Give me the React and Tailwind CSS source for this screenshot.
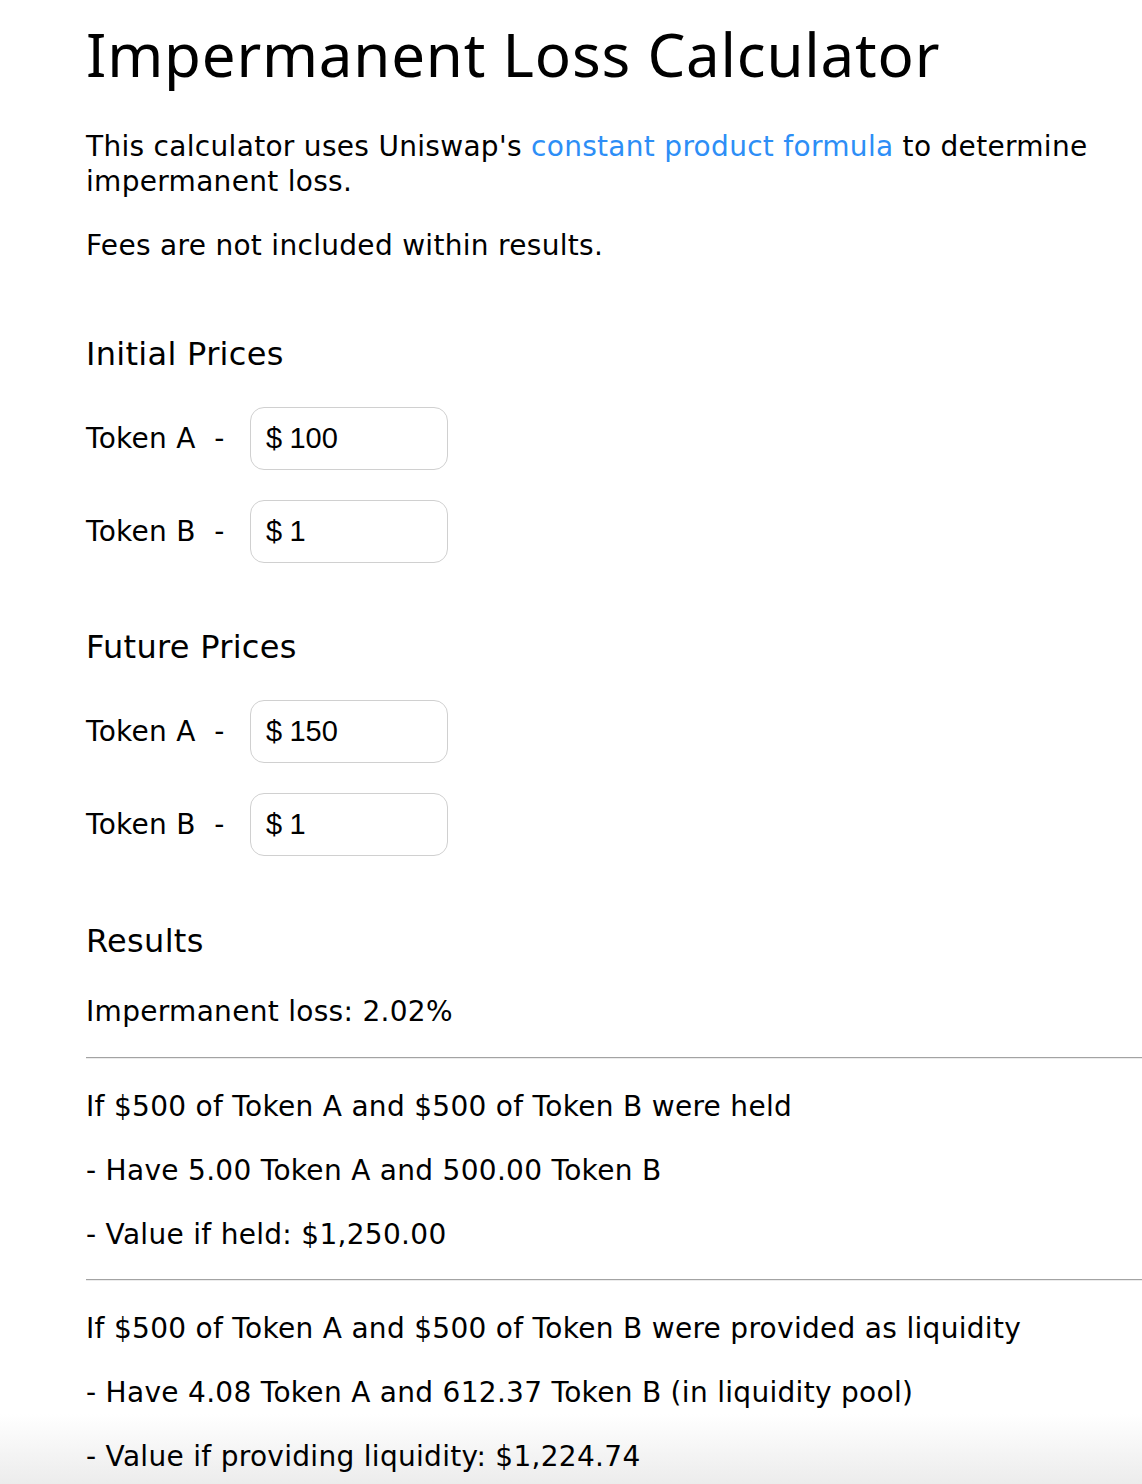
import React, { useState } from 'react';

// Impermanent loss calculator page
const PriceInput = ({ value, onChange }) => (
  <div className="flex items-center w-[198px] h-[63px] rounded-[14px] border border-[#d0d0d0] bg-white px-[15px]">
    <span className="text-[29px] text-black" style={{ fontFamily: '"Liberation Sans", Arial, sans-serif' }}>$</span>
    <input
      value={value}
      onChange={(e) => onChange(e.target.value)}
      className="ml-[7px] w-full bg-transparent outline-none text-[29px] text-black tracking-normal"
      style={{ fontFamily: '"Liberation Sans", Arial, sans-serif' }}
    />
  </div>
);

const TokenRow = ({ label, value, onChange }) => (
  <div className="flex items-center">
    <span className="w-[164px] whitespace-pre">{label}  -</span>
    <PriceInput value={value} onChange={onChange} />
  </div>
);

const fmt = (n) => n.toLocaleString('en-US', { minimumFractionDigits: 2, maximumFractionDigits: 2 });

const App = () => {
  const [initA, setInitA] = useState('100');
  const [initB, setInitB] = useState('1');
  const [futA, setFutA] = useState('150');
  const [futB, setFutB] = useState('1');

  // constant product math
  const ia = parseFloat(initA) || 0;
  const ib = parseFloat(initB) || 0;
  const fa = parseFloat(futA) || 0;
  const fb = parseFloat(futB) || 0;
  const amtA = ia ? 500 / ia : 0;
  const amtB = ib ? 500 / ib : 0;
  const held = amtA * fa + amtB * fb;
  const k = amtA * amtB;
  const ratio = fa && fb ? fa / fb : 0;
  const poolA = ratio ? Math.sqrt(k / ratio) : 0;
  const poolB = ratio ? Math.sqrt(k * ratio) : 0;
  const pooled = poolA * fa + poolB * fb;
  const loss = held ? ((held - pooled) / held) * 100 : 0;

  return (
    <div
      className="relative min-h-[1484px] bg-white text-black overflow-hidden"
      style={{ fontFamily: '"DejaVu Sans", "Noto Sans", sans-serif' }}
    >
      <div className="absolute left-0 right-0 bottom-0 h-[70px] bg-gradient-to-b from-white to-[#ececec]"></div>

      <div className="relative pl-[86px] text-[28px] leading-[35px] tracking-[0.3px]">
        <h1
          className="pt-[18px] text-[60px] leading-[72px] font-normal tracking-[0.8px]"
          style={{ fontFamily: '"Noto Sans", sans-serif' }}
        >
          Impermanent Loss Calculator
        </h1>

        <p className="mt-[39px]">
          This calculator uses Uniswap's{' '}
          <a href="#" className="text-[#2d8ef6]">constant product formula</a> to determine impermanent loss.
        </p>
        <p className="mt-[29px]">Fees are not included within results.</p>

        <h2 className="mt-[71px] text-[32px] leading-[40px]">Initial Prices</h2>
        <div className="mt-[33px] flex flex-col gap-[30px]">
          <TokenRow label="Token A" value={initA} onChange={setInitA} />
          <TokenRow label="Token B" value={initB} onChange={setInitB} />
        </div>

        <h2 className="mt-[64px] text-[32px] leading-[40px]">Future Prices</h2>
        <div className="mt-[33px] flex flex-col gap-[30px]">
          <TokenRow label="Token A" value={futA} onChange={setFutA} />
          <TokenRow label="Token B" value={futB} onChange={setFutB} />
        </div>

        <h2 className="mt-[65px] text-[32px] leading-[40px]">Results</h2>
        <p className="mt-[33px]">Impermanent loss: {loss.toFixed(2)}%</p>

        <hr className="mt-[28px] border-0 border-t border-t-[#a3a3a3] border-b border-b-[#ececec]" />
        <div className="mt-[30px] flex flex-col gap-[29px]">
          <p>If $500 of Token A and $500 of Token B were held</p>
          <p>- Have {fmt(amtA)} Token A and {fmt(amtB)} Token B</p>
          <p>- Value if held: ${fmt(held)}</p>
        </div>

        <hr className="mt-[27px] border-0 border-t border-t-[#a3a3a3] border-b border-b-[#ececec]" />
        <div className="mt-[30px] flex flex-col gap-[29px]">
          <p>If $500 of Token A and $500 of Token B were provided as liquidity</p>
          <p>- Have {fmt(poolA)} Token A and {fmt(poolB)} Token B (in liquidity pool)</p>
          <p>- Value if providing liquidity: ${fmt(pooled)}</p>
        </div>
      </div>
    </div>
  );
};

export default App;
